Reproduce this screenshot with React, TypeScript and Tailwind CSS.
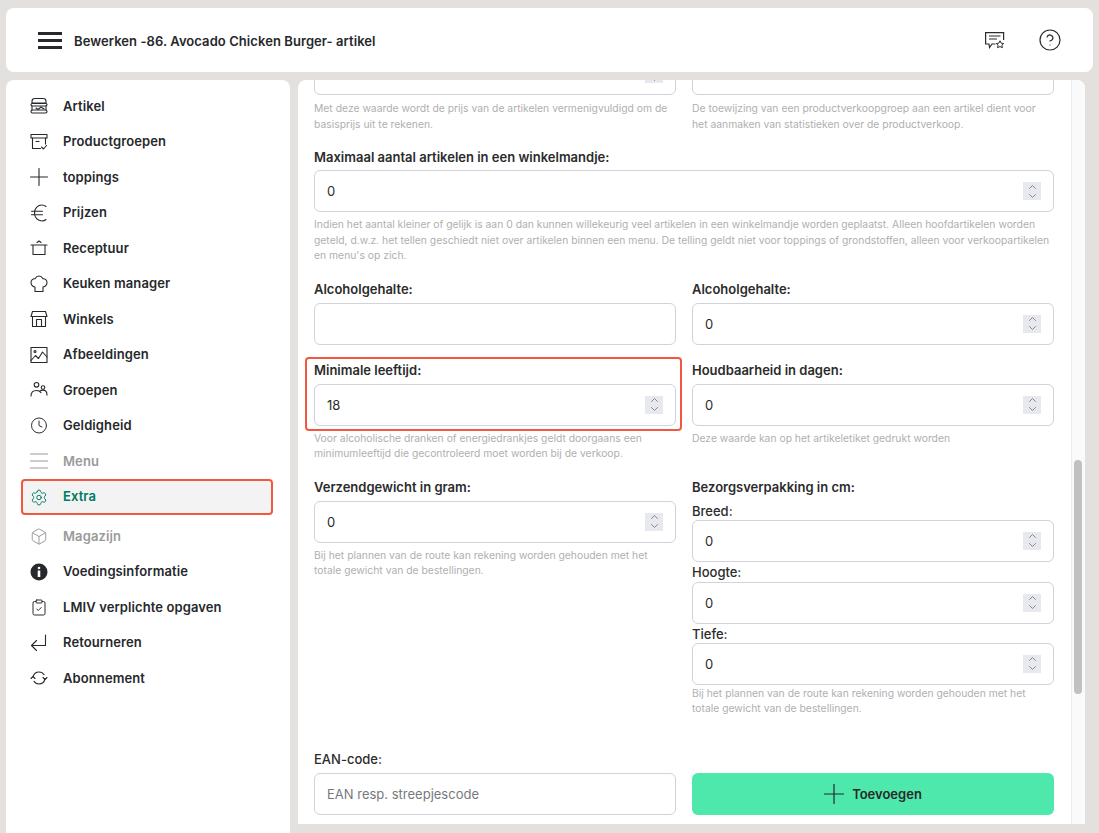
import { Box, ChevronDown, ChevronUp, CircleHelp, ClipboardCheck, Clock, Settings } from "lucide-react";
import type { ReactNode } from "react";

const thin = { size: 21, strokeWidth: 1.3 };

function Svg({ children }: { children: ReactNode }) {
    return (
        <svg width="18" height="18" viewBox="0 0 18 18" fill="none" stroke="currentColor" strokeWidth="1.1" strokeLinecap="round" strokeLinejoin="round">
            {children}
        </svg>
    );
}

const BurgerIcon = () => (
    <Svg>
        <path d="M2 6V4.200C2 2.600 3.500 1.500 5 1.500h8c1.500 0 3 1.100 3 2.700V6z" />
        <rect x="1" y="6.500" width="16" height="2.500" rx="1.200" />
        <path d="M2 9v4M16 9v4M6 11l2 1.500 3-2.500 3 2" />
        <rect x="1" y="13" width="16" height="3" rx="1.500" />
    </Svg>
);
const ArchiveIcon = () => (
    <Svg>
        <rect x="1" y="1.500" width="16" height="3.500" />
        <path d="M2.500 5v10.500h8M15.500 5v6M6 8.500h3M11.500 14l2 2 3-3.500" />
    </Svg>
);
const PlusIcon = () => (
    <Svg>
        <path d="M9 0.500v17M0.500 9h17" />
    </Svg>
);
const EuroIcon = () => (
    <Svg>
        <path d="M16 2.500C14.800 1.500 13.500 1 12 1 7.500 1 4.500 4.500 4.500 9s3 8 7.500 8c1.500 0 2.800-.5 4-1.500M1.500 7.300h11M1.500 10.700h11" />
    </Svg>
);
const PotIcon = () => (
    <Svg>
        <path d="M7 3.500 9 2l2 1.500M1 6h16M3 6v9.500h12V6" />
    </Svg>
);
const ChefIcon = () => (
    <Svg>
        <path d="M5 16.500h8v-4.500c2.500-.5 4-2.200 4-4.500 0-2.400-2-4-4-3.800C12 2 10.500 1 9 1S6 2 5 3.700C3 3.500 1 5.100 1 7.500c0 2.300 1.500 4 4 4.500z" />
    </Svg>
);
const StoreIcon = () => (
    <Svg>
        <path d="M2.500 1.500h13l1.500 5H1zM2.500 6.500v10h13v-10M6.500 16.500v-7h5v7" />
    </Svg>
);
const PictureIcon = () => (
    <Svg>
        <rect x="1" y="1.500" width="16" height="15" />
        <path d="m1 14.500 4.500-5 3 3 4-6.500 4.500 5" />
        <circle cx="5" cy="5.500" r="1" />
    </Svg>
);
const PeopleIcon = () => (
    <Svg>
        <circle cx="6.500" cy="3.800" r="2.300" />
        <circle cx="13" cy="6.500" r="1.800" />
        <path d="M1 15c0-3.500 2.300-5.500 5.500-5.500 2 0 3.500.8 4.500 2.200M10 10c.8-.6 1.800-.9 3-.9 2.400 0 4 2 4 5" />
    </Svg>
);
const BarsIcon = () => (
    <Svg>
        <path d="M0.500 2h17M0.500 9h17M0.500 16h17" />
    </Svg>
);
const ReturnIcon = () => (
    <Svg>
        <path d="M15.500 1v10.500H1.500M6.500 6.500l-5 5 5 5" />
    </Svg>
);
const InfoIcon = () => (
    <svg width="18" height="18" viewBox="0 0 18 18">
        <circle cx="9" cy="9" r="8.500" fill="#26282b" />
        <circle cx="9" cy="5" r="1.300" fill="#fff" />
        <rect x="7.700" y="7.500" width="2.600" height="6.500" fill="#fff" />
    </svg>
);
const SyncIcon = () => (
    <Svg>
        <path d="M3 8C3.800 4.800 6.200 3 9 3c2.200 0 4 1 5 2.700M15 10c-.8 3.200-3.200 5-6 5-2.200 0-4-1-5-2.700" />
        <path d="M1 9.500l2-2 2 2M13 8.500l2 2 2-2" />
    </Svg>
);
const FeedbackIcon = () => (
    <svg width="20" height="17" viewBox="0 0 20 17" fill="none" stroke="#2b2b2b" strokeWidth="1.200">
        <path d="M10.500 12H7l-2.500 3.500L4 12H.6V.6h18V8" />
        <path d="M4 4h11.500M4 7h8" />
        <path d="m15 8.800 1.200 2.400 2.500.3-1.800 1.700.5 2.500-2.400-1.200-2.400 1.200.5-2.500-1.800-1.700 2.500-.3z" strokeWidth="1" />
    </svg>
);

const menuTop = [
    { label: "Artikel", icon: <BurgerIcon /> },
    { label: "Productgroepen", icon: <ArchiveIcon /> },
    { label: "toppings", icon: <PlusIcon /> },
    { label: "Prijzen", icon: <EuroIcon /> },
    { label: "Receptuur", icon: <PotIcon /> },
    { label: "Keuken manager", icon: <ChefIcon /> },
    { label: "Winkels", icon: <StoreIcon /> },
    { label: "Afbeeldingen", icon: <PictureIcon /> },
    { label: "Groepen", icon: <PeopleIcon /> },
    { label: "Geldigheid", icon: <Clock {...thin} /> },
];

const menuBottom = [
    { label: "Voedingsinformatie", icon: <InfoIcon /> },
    { label: "LMIV verplichte opgaven", icon: <ClipboardCheck {...thin} /> },
    { label: "Retourneren", icon: <ReturnIcon /> },
    { label: "Abonnement", icon: <SyncIcon /> },
];

function NavItem({ label, icon, muted }: { label: string; icon: ReactNode; muted?: boolean }) {
    return (
        <div className={`h-[35.5px] flex items-center gap-[15px] pl-6 text-[13px] font-semibold tracking-[0.1px] ${muted ? "text-[#9a9a9a]" : "text-[#26282b]"}`}>
            <span className="w-[18px] flex justify-center">{icon}</span>
            {label}
        </div>
    );
}

function NumberInput({ value, placeholder, spinner = true }: { value?: string; placeholder?: string; spinner?: boolean }) {
    return (
        <div className="h-[42px] bg-white border border-[#d0d3db] rounded-md flex items-center justify-between pl-3 pr-3 text-[13px] text-[#2b2b2b]">
            {placeholder ? <span className="text-[#77797d] pt-[2px]">{placeholder}</span> : <span className="pt-[2px]">{value}</span>}
            {spinner && (
                <span className="w-[18px] h-[18px] bg-[#e8e8ef] flex flex-col items-center justify-center text-[#6f7075]">
                    <ChevronUp size={13} strokeWidth={1.6} className="-my-[1.5px]" />
                    <ChevronDown size={13} strokeWidth={1.6} className="-my-[1.5px]" />
                </span>
            )}
        </div>
    );
}

function Label({ children, plain }: { children: ReactNode; plain?: boolean }) {
    return <div className={`text-[13px] leading-[16px] text-[#2b2b2b] ${plain ? "font-medium" : "font-semibold"}`}>{children}</div>;
}

function Help({ children }: { children: ReactNode }) {
    return <p className="text-[10.35px] leading-[15.500px] text-[#b0b0b0]">{children}</p>;
}

export default function App() {
    return (
        <div className="h-[833px] overflow-hidden bg-[#e3e0de] flex flex-col gap-2 pt-2 px-[6px] font-['Inter',sans-serif]">
            <header className="h-16 shrink-0 bg-white rounded-lg flex items-center justify-between pl-8 pr-[31px]">
                <div className="flex items-center gap-3">
                    <div className="w-6 flex flex-col gap-[4px] mt-px">
                        <div className="h-[3px] bg-[#26282b]" />
                        <div className="h-[3px] bg-[#26282b]" />
                        <div className="h-[3px] bg-[#26282b]" />
                    </div>
                    <h1 className="text-[13px] font-semibold text-[#26282b] pt-[3px] tracking-[0.07px]">Bewerken -86. Avocado Chicken Burger- artikel</h1>
                </div>
                <div className="flex items-center gap-[33px]">
                    <FeedbackIcon />
                    <CircleHelp size={24} strokeWidth={1.2} className="text-[#2b2b2b]" />
                </div>
            </header>

            <div className="flex gap-2 flex-1 min-h-0">
                <aside className="w-[284px] bg-white rounded-t-lg pt-[8.500px] shrink-0">
                    {menuTop.map(item => <NavItem key={item.label} {...item} />)}
                    <NavItem label="Menu" icon={<BarsIcon />} muted />
                    <div className="ml-[15px] mr-[17px] h-[36px] mb-[3.700px] pl-[7px] flex items-center gap-[15px] bg-[#f3f3f3] border-2 border-[#f2583f] rounded text-[13px] font-semibold tracking-[0.1px] text-[#00795f]">
                        <span className="w-[18px] flex justify-center"><Settings {...thin} /></span>
                        Extra
                    </div>
                    <NavItem label="Magazijn" icon={<Box {...thin} />} muted />
                    {menuBottom.map(item => <NavItem key={item.label} {...item} />)}
                </aside>

                <main className="w-[787px] h-[744px] bg-white rounded-t-lg flex overflow-hidden">
                    <div className="flex-1 overflow-hidden pl-4 pr-[17px]">
                        <div className="-mt-[27px]">
                            <div className="grid grid-cols-2 gap-x-4">
                                <div>
                                    <NumberInput value="" />
                                    <div className="mt-[6px]"><Help>Met deze waarde wordt de prijs van de artikelen vermenigvuldigd om de basisprijs uit te rekenen.</Help></div>
                                </div>
                                <div>
                                    <NumberInput spinner={false} />
                                    <div className="mt-[6px]"><Help>De toewijzing van een productverkoopgroep aan een artikel dient voor het aanmaken van statistieken over de productverkoop.</Help></div>
                                </div>
                            </div>

                            <div className="mt-[17px]">
                                <Label>Maximaal aantal artikelen in een winkelmandje:</Label>
                                <div className="mt-[5px]"><NumberInput value="0" /></div>
                                <div className="mt-[5px]"><Help>Indien het aantal kleiner of gelijk is aan 0 dan kunnen willekeurig veel artikelen in een winkelmandje worden geplaatst. Alleen hoofdartikelen worden geteld, d.w.z. het tellen geschiedt niet over artikelen binnen een menu. De telling geldt niet voor toppings of grondstoffen, alleen voor verkoopartikelen en menu's op zich.</Help></div>
                            </div>

                            <div className="grid grid-cols-2 gap-x-4 mt-[17px]">
                                <div>
                                    <Label>Alcoholgehalte:</Label>
                                    <div className="mt-[6px]"><NumberInput spinner={false} /></div>
                                </div>
                                <div>
                                    <Label>Alcoholgehalte:</Label>
                                    <div className="mt-[6px]"><NumberInput value="0" /></div>
                                </div>
                            </div>

                            <div className="grid grid-cols-2 gap-x-4 mt-[17px]">
                                <div>
                                    <div className="relative">
                                        <div className="absolute -left-[9px] -right-[6px] -top-[5px] -bottom-[5px] border-2 border-[#f2583f] rounded" />
                                        <Label>Minimale leeftijd:</Label>
                                        <div className="mt-[6px]"><NumberInput value="18" /></div>
                                    </div>
                                    <div className="mt-[5px]"><Help>Voor alcoholische dranken of energiedrankjes geldt doorgaans een minimumleeftijd die gecontroleerd moet worden bij de verkoop.</Help></div>
                                </div>
                                <div>
                                    <Label>Houdbaarheid in dagen:</Label>
                                    <div className="mt-[6px]"><NumberInput value="0" /></div>
                                    <div className="mt-[5px]"><Help>Deze waarde kan op het artikeletiket gedrukt worden</Help></div>
                                </div>
                            </div>

                            <div className="grid grid-cols-2 gap-x-4 mt-[17px]">
                                <div>
                                    <Label>Verzendgewicht in gram:</Label>
                                    <div className="mt-[6px]"><NumberInput value="0" /></div>
                                    <div className="mt-[5px]"><Help>Bij het plannen van de route kan rekening worden gehouden met het totale gewicht van de bestellingen.</Help></div>
                                </div>
                                <div>
                                    <Label>Bezorgsverpakking in cm:</Label>
                                    <div className="mt-[8px]"><Label plain>Breed:</Label></div>
                                    <div className="mt-[1px]"><NumberInput value="0" /></div>
                                    <div className="mt-[2px]"><Label plain>Hoogte:</Label></div>
                                    <div className="mt-[2px]"><NumberInput value="0" /></div>
                                    <div className="mt-[2px]"><Label plain>Tiefe:</Label></div>
                                    <div className="mt-[1px]"><NumberInput value="0" /></div>
                                    <div className="mt-[1px]"><Help>Bij het plannen van de route kan rekening worden gehouden met het totale gewicht van de bestellingen.</Help></div>
                                </div>
                            </div>

                            <div className="grid grid-cols-2 gap-x-4 mt-[34px] items-end">
                                <div>
                                    <Label plain>EAN-code:</Label>
                                    <div className="mt-[6px]"><NumberInput placeholder="EAN resp. streepjescode" spinner={false} /></div>
                                </div>
                                <button className="h-[42px] bg-[#4fe8ac] rounded-md flex items-center justify-center gap-2 text-[13px] font-semibold text-[#26282b]">
                                    <svg width="20" height="20" viewBox="0 0 20 20" fill="none" stroke="currentColor" strokeWidth="1.200">
                                        <path d="M10 0v20M0 10h20" />
                                    </svg>
                                    <span className="pt-[2px]">Toevoegen</span>
                                </button>
                            </div>
                        </div>
                    </div>

                    <div className="w-[14px] shrink-0 bg-[#fafafa] border-l border-[#ececec] pt-[380px] pl-[2px]">
                        <div className="w-[8px] h-[234px] rounded bg-[#c1c1c1]" />
                    </div>
                </main>
            </div>
        </div>
    );
}
